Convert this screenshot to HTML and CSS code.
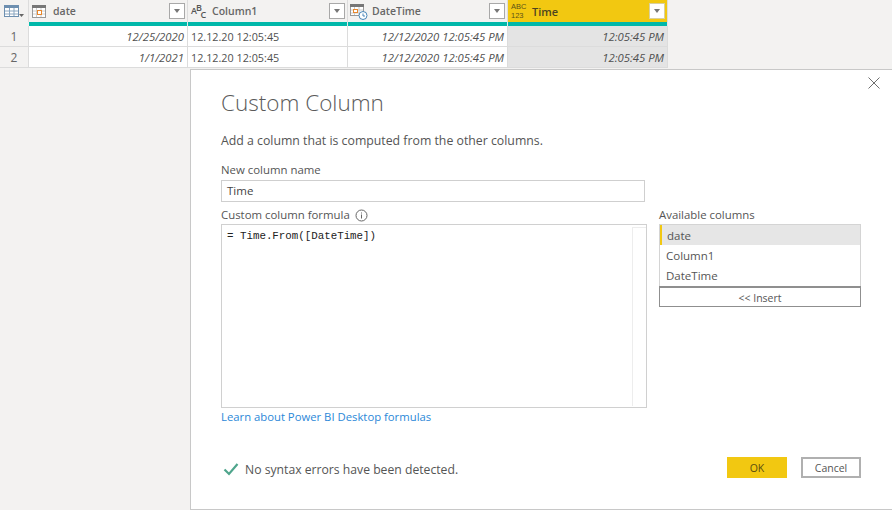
FILE: index.html
```html
<!DOCTYPE html>
<html lang="en">
<head>
<meta charset="utf-8">
<title>Custom Column</title>
<link rel="stylesheet" href="styles.css">
</head>
<body>
<div class="grid">
  <div class="hcell corner">
    <svg class="ic" width="24" height="18" viewBox="0 0 24 18"><rect x="4.500" y="3.500" width="14" height="11" fill="#fff" stroke="#6d8fb0"/><rect x="4" y="3" width="15" height="3" fill="#6d8fb0"/><path d="M9.500 6v8M14 6v8M5 9h13M5 12h13" stroke="#8aa6c0"/><path d="M19 12h5l-2.500 3z" fill="#666"/></svg>
  </div>
  <div class="hcell">
    <svg class="ic" width="20" height="18" viewBox="0 0 20 18"><rect x="2.500" y="3.500" width="13" height="12" fill="#fff" stroke="#999"/><rect x="2" y="3" width="14" height="3" fill="#777"/><path d="M6.500 6v9M11 6v9M3 9h12M3 12h12" stroke="#ccc"/><rect x="7.500" y="8.500" width="4" height="4" fill="#fff" stroke="#e8872c"/></svg>
    <span class="hname name-date">date</span>
    <span class="drop"><i></i></span>
  </div>
  <div class="hcell">
    <svg class="ic" width="20" height="22" viewBox="0 0 20 22"><text x="2" y="14" class="abc-s">A</text><text x="7" y="11" class="abc-s">B</text><text x="11.500" y="17.500" class="abc-s">C</text></svg>
    <span class="hname name-col">Column1</span>
    <span class="drop"><i></i></span>
  </div>
  <div class="hcell">
    <svg class="ic" width="20" height="20" viewBox="0 0 20 20"><rect x="1.500" y="3.500" width="13" height="11" fill="#fff" stroke="#999"/><rect x="1" y="3" width="14" height="3" fill="#777"/><path d="M5.500 6v8M10 6v8M2 9h12M2 12h12" stroke="#ccc"/><rect x="4.500" y="8.500" width="4" height="3" fill="#fff" stroke="#e8872c"/><circle cx="14" cy="14.500" r="4" fill="#fff" stroke="#4a86b8"/><path d="M14 12.500v2.500h2" fill="none" stroke="#4a86b8"/></svg>
    <span class="hname name-col">DateTime</span>
    <span class="drop"><i></i></span>
  </div>
  <div class="hcell hcell-active">
    <div class="anytype"><span>ABC</span><span>123</span></div>
    <span class="hname name-time">Time</span>
    <span class="drop"><i></i></span>
  </div>

  <div class="teal-spacer"></div>
  <div class="teal"></div><div class="teal"></div><div class="teal"></div><div class="teal"></div>

  <div class="rownum">1</div>
  <div class="cell right">12/25/2020</div>
  <div class="cell">12.12.20 12:05:45</div>
  <div class="cell right">12/12/2020 12:05:45 PM</div>
  <div class="cell right cell-sel">12:05:45 PM</div>

  <div class="rownum">2</div>
  <div class="cell right">1/1/2021</div>
  <div class="cell">12.12.20 12:05:45</div>
  <div class="cell right">12/12/2020 12:05:45 PM</div>
  <div class="cell right cell-sel">12:05:45 PM</div>
</div>

<section class="dialog">
  <svg class="close" width="12" height="12" viewBox="0 0 12 12"><path d="M.5.500l11 11M11.500.500l-11 11" stroke="#6e6e6e" fill="none"/></svg>
  <h1 class="title">Custom Column</h1>
  <p class="desc">Add a column that is computed from the other columns.</p>
  <label class="label label-name">New column name</label>
  <div class="input">Time</div>
  <div class="columns">
    <div class="left">
      <div class="label label-formula">Custom column formula
        <svg class="info" width="13" height="13" viewBox="0 0 13 13"><circle cx="6.500" cy="6.500" r="5.500" fill="none" stroke="#666"/><path d="M6.500 5.500v4M6.500 3.500v1" stroke="#666"/></svg>
      </div>
      <div class="editor">
        <code class="code">= Time.From([DateTime])</code>
        <div class="scroll"></div>
      </div>
      <a class="link" href="#">Learn about Power BI Desktop formulas</a>
    </div>
    <div class="right-col">
      <div class="label label-formula">Available columns</div>
      <ul class="list">
        <li class="item item-sel">date</li>
        <li class="item">Column1</li>
        <li class="item">DateTime</li>
      </ul>
      <button class="insert">&lt;&lt; Insert</button>
    </div>
  </div>
  <div class="footer">
    <svg class="check" width="16" height="14" viewBox="0 0 16 14"><path d="M1.500 7.500l4.500 4.500 8.500-10" fill="none" stroke="#4fa58c" stroke-width="2.200"/></svg>
    <span class="status">No syntax errors have been detected.</span>
    <button class="btn btn-ok">OK</button>
    <button class="btn btn-cancel">Cancel</button>
  </div>
</section>
</body>
</html>
```
FILE: styles.css
```css
* { box-sizing: border-box; }
html, body { margin: 0; padding: 0; }
body {
  width: 892px;
  height: 510px;
  overflow: hidden;
  background: #f3f2f1;
  font-family: "Open Sans", "Noto Sans", sans-serif;
  color: #4a4a4a;
  display: flex;
  flex-direction: column;
}
.grid {
  display: grid;
  grid-template-columns: 29px 159px 160px 160px 160px;
  grid-template-rows: 22px 4px 21px 21px;
  width: 668px;
  height: 68px;
  flex: none;
  background: #f3f2f1;
}
.hcell {
  display: flex;
  align-items: center;
  border-right: 1px solid #dcdcdc;
  padding: 0 1px;
  min-width: 0;
}
.hcell-active { background: #f2c811; padding-left: 3px; }
.ic { flex: none; }
.corner { padding: 0; }
.hname { font-size: 10.500px; font-weight: 600; color: #666; flex: 1; }
.name-date { padding-left: 3px; }
.name-col { padding-left: 3px; }
.name-time { color: #4c4420; font-size: 11px; padding-left: 3px; }
.abc-s { font: 600 9px "Open Sans", sans-serif; fill: #555; }
.anytype {
  display: flex;
  flex-direction: column;
  font-family: "Liberation Sans", sans-serif;
  font-size: 7.500px;
  line-height: 9px;
  color: #5d5318;
  width: 18px;
  flex: none;
}
.drop {
  width: 16px;
  height: 16px;
  margin-right: 1px;
  flex: none;
  background: #fff;
  border: 1px solid #a8a8a8;
  display: flex;
  align-items: center;
  justify-content: center;
}
.hcell-active .drop { border-color: #d8d0a0; }
.drop i {
  display: block;
  border: 3.500px solid transparent;
  border-top: 4px solid #777;
  border-bottom: 0;
}
.teal-spacer { background: #f3f2f1; }
.teal { background: #01b8aa; border-right: 1px solid #e8e8e8; }
.rownum {
  font-size: 12px;
  display: flex;
  align-items: center;
  justify-content: center;
  color: #666;
  border-right: 1px solid #dcdcdc;
  border-bottom: 1px solid #dcdcdc;
}
.cell {
  background: #fff;
  font-size: 10.800px;
  display: flex;
  align-items: center;
  padding: 0 3px;
  border-right: 1px solid #dcdcdc;
  border-bottom: 1px solid #dcdcdc;
  color: #4f4f4f;
  white-space: nowrap;
  overflow: hidden;
}
.right { justify-content: flex-end; font-style: italic; font-size: 11.300px; }
.cell-sel { background: #e4e4e4; }

.dialog {
  position: relative;
  flex: 1;
  margin: 1px 0 0 190px;
  background: #fff;
  border-left: 1px solid #c8c8c8;
  border-top: 1px solid #c8c8c8;
  border-bottom: 1px solid #c8c8c8;
  padding: 0 31px 0 30px;
  display: flex;
  flex-direction: column;
}
.close { position: absolute; top: 7px; right: 12px; }
.title {
  margin: 17px 0 0;
  font-size: 22.500px;
  line-height: 32px;
  font-weight: 300;
  color: #5a5a5a;
}
.desc { margin: 13px 0 0; font-size: 12.300px; line-height: 18px; color: #555; }
.label { display: block; font-size: 11.400px; line-height: 16px; color: #555; }
.label-name { margin-top: 12px; }
.input {
  width: 424px;
  height: 22px;
  margin-top: 2px;
  border: 1px solid #cfcfcf;
  font-size: 11.500px;
  line-height: 20px;
  padding-left: 5px;
  color: #444;
}
.columns { display: flex; gap: 12px; margin-top: 5px; }
.left { width: 426px; display: flex; flex-direction: column; }
.label-formula { height: 17px; padding-bottom: 2px; display: flex; align-items: center; gap: 5px; }
.info { flex: none; margin-top: 2px; }
.editor {
  height: 184px;
  border: 1px solid #d0d0d0;
  display: flex;
  justify-content: space-between;
  padding: 3px 0 1px 5px;
}
.code { font: 10.800px/16px "Liberation Mono", monospace; color: #222; }
.scroll { width: 14px; margin-top: -1px; border-left: 1px solid #ededed; border-top: 1px solid #ededed; }
.link { margin-top: 1px; font-size: 11.300px; line-height: 16px; color: #2b88d8; text-decoration: none; }
.right-col { width: 202px; display: flex; flex-direction: column; }
.list { list-style: none; margin: 0; padding: 0; border: 1px solid #d4d4d4; border-bottom: 0; height: 62px; }
.item { height: 20px; font-size: 11.500px; line-height: 22px; padding-left: 6px; color: #555; }
.item-sel { background: #e6e6e6; border-left: 2px solid #f2c811; padding-left: 5px; }
.insert {
  height: 21px;
  background: #fff;
  border: 1px solid #8f8f8f;
  border-top-width: 2px;
  font: 10.500px "Open Sans", sans-serif;
  color: #555;
  padding: 1px 0 0;
}
.footer { display: flex; align-items: center; margin-top: 33px; height: 22px; }
.check { flex: none; margin-left: 2px; }
.status { margin-left: 6px; font-size: 12.200px; color: #555; flex: 1; }
.btn { width: 60px; height: 21px; font: 10.500px "Open Sans", sans-serif; padding: 0; margin-bottom: 3px; }
.btn-ok { background: #f2c811; border: 0; color: #5a4e10; }
.btn-cancel { margin-left: 14px; background: #fff; border: 2px solid #b0b0b0; color: #555; }
```
